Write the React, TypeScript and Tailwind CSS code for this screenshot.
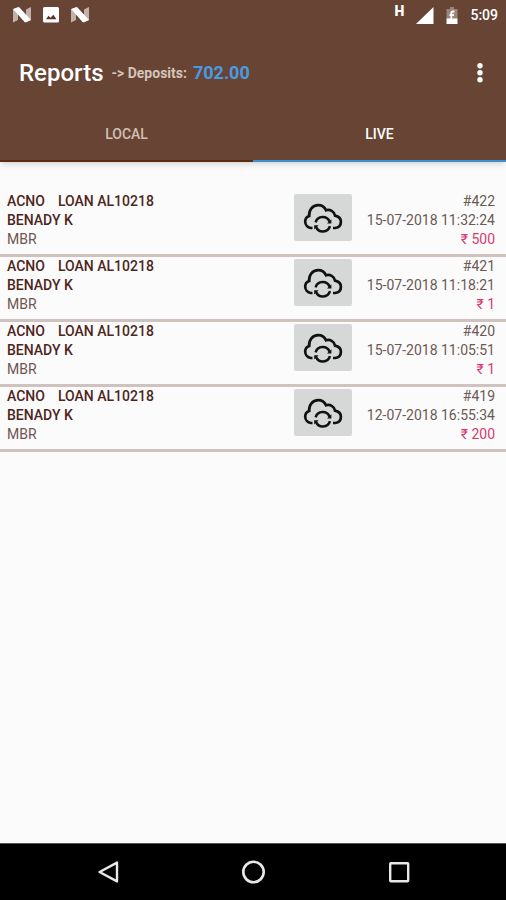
interface Deposit {
  id: number;
  account: string;
  name: string;
  branch: string;
  date: string;
  amount: number;
}

const deposits: Deposit[] = [
  { id: 422, account: 'LOAN AL10218', name: 'BENADY K', branch: 'MBR', date: '15-07-2018 11:32:24', amount: 500 },
  { id: 421, account: 'LOAN AL10218', name: 'BENADY K', branch: 'MBR', date: '15-07-2018 11:18:21', amount: 1 },
  { id: 420, account: 'LOAN AL10218', name: 'BENADY K', branch: 'MBR', date: '15-07-2018 11:05:51', amount: 1 },
  { id: 419, account: 'LOAN AL10218', name: 'BENADY K', branch: 'MBR', date: '12-07-2018 16:55:34', amount: 200 },
];

function NougatIcon() {
  return (
    <svg viewBox="0 0 18 16" className="w-[18px] h-4" aria-hidden="true">
      <path d="M0 2.5 5 0v13L0 15.5z" fill="#c3b0a8" />
      <path d="M13 2.5 18 0v13l-5 2.5z" fill="#c3b0a8" />
      <path d="M0 2 6 0l12 13-6 2.5z" fill="#fff" />
    </svg>
  );
}

function PictureIcon() {
  return (
    <svg viewBox="0 0 16 16" className="w-4 h-4" aria-hidden="true">
      <rect width="16" height="15.5" rx="1.5" fill="#fff" />
      <path d="M3 12.2 5.5 8.8l2 2 2.8-3 3.2 4.4z" fill="#5a3526" />
    </svg>
  );
}

function SignalIcon() {
  return (
    <svg viewBox="0 0 18 17" className="w-[18px] h-[17px]" aria-hidden="true">
      <path d="M17.5 0v17H0z" fill="#fff" />
    </svg>
  );
}

function BatteryIcon() {
  return (
    <svg viewBox="0 0 12 17" className="w-3 h-[17px]" aria-hidden="true">
      <path d="M4 0h4v2h3.5v10H.5V2H4z" fill="#9c8378" />
      <path d="M.5 11.5h11V17H.5z" fill="#fff" />
      <path d="M8.5 4.5H6.8C5.8 4.500 5.3 5 5.3 6v6M3.5 8H8" fill="none" stroke="#fff" strokeWidth="1.8" />
    </svg>
  );
}

function CloudSyncIcon() {
  return (
    <svg viewBox="0 0 40 30" className="w-10 h-[30px]" fill="none" stroke="#111" aria-hidden="true">
      <path
        d="M9.500 25H7.800C4.600 24.600 2.200 22 2.200 18.600c0-2.600 1.500-4.600 4-5.500C5.600 7.200 9.600 2.200 15.200 2.200c3.600 0 6.400 2 7.800 5.100 3.900-1.200 8.200.8 9 5.300 3.600.7 5.900 3 5.900 6.100 0 3.400-2.300 5.900-5.700 6.300H30"
        strokeWidth="2.7"
      />
      <path d="M12.600 19.400a7.400 7.400 0 0 1 14-.6" strokeWidth="2.5" />
      <path d="M27 23.200a7.400 7.400 0 0 1-14 .6" strokeWidth="2.500" />
      <path d="M28.400 16.200v4.200h-4.400z" fill="#111" stroke="none" />
      <path d="M11.200 26.400v-4.200h4.400z" fill="#111" stroke="none" />
    </svg>
  );
}

function StatusBar() {
  return (
    <div className="flex items-center justify-between h-[30px] pl-[13px] pr-2">
      <div className="flex items-center gap-3">
        <NougatIcon />
        <PictureIcon />
        <NougatIcon />
      </div>
      <div className="flex items-center h-full">
        <span className="self-start text-sm leading-[22px] font-black">H</span>
        <span className="flex items-center gap-3 ml-3">
          <SignalIcon />
          <BatteryIcon />
          <span className="text-sm font-medium">5:09</span>
        </span>
      </div>
    </div>
  );
}

function Toolbar() {
  return (
    <div className="flex items-center h-[77px] pt-2 pl-[19px] pr-[15px]">
      <h1 className="text-2xl font-medium">Reports</h1>
      <span className="ml-2 text-sm font-bold text-[#d5c5bb]">-&gt; Deposits:</span>
      <span className="ml-[6px] text-lg font-bold text-[#4a9be0]">702.00</span>
      <button type="button" aria-label="More options" className="ml-auto px-2 py-1">
        <svg viewBox="0 0 6 20" className="w-[6px] h-5" fill="#fff" aria-hidden="true">
          <circle cx="3" cy="2.7" r="2.7" />
          <circle cx="3" cy="9.7" r="2.7" />
          <circle cx="3" cy="16.7" r="2.7" />
        </svg>
      </button>
    </div>
  );
}

function Tabs() {
  return (
    <div role="tablist" className="flex h-[55px] text-sm font-medium">
      <button type="button" role="tab" aria-selected="false" className="flex-1 border-b-2 border-[#5a2d10] text-[#d3c0b5]">
        LOCAL
      </button>
      <button type="button" role="tab" aria-selected="true" className="flex-1 border-b-2 border-[#3d8fd1] text-white">
        LIVE
      </button>
    </div>
  );
}

function DepositRow({ deposit }: { deposit: Deposit }) {
  return (
    <li className="flex items-start h-[65px] pl-[7px] pr-[11px] border-b-3 border-[#d0c2be] text-sm leading-[19px]">
      <div className="flex-1 font-medium text-[#4e261c]">
        <p>
          <span>ACNO</span>
          <span className="ml-[13px]">{deposit.account}</span>
        </p>
        <p>{deposit.name}</p>
        <p className="font-normal text-[#6d5650]">{deposit.branch}</p>
      </div>
      <button
        type="button"
        aria-label="Sync deposit"
        className="flex items-center justify-center w-[58px] h-[47px] mt-[2px] rounded-xs bg-[#d6d8d7]"
      >
        <CloudSyncIcon />
      </button>
      <div className="w-[143px] text-right text-[#6b5954]">
        <p>#{deposit.id}</p>
        <p>{deposit.date}</p>
        <p className="text-[#d63a70]">₹ {deposit.amount}</p>
      </div>
    </li>
  );
}

function NavigationBar() {
  return (
    <nav className="flex h-[57px] px-9 bg-black border-t border-[#555]">
      <button type="button" aria-label="Back" className="flex flex-1 items-center justify-center">
        <svg viewBox="0 0 24 24" className="w-6 h-6" fill="none" stroke="#e8e8e8" strokeWidth="2.4" aria-hidden="true">
          <path d="M21 2.6v18.8L3.6 12z" strokeLinejoin="round" />
        </svg>
      </button>
      <button type="button" aria-label="Home" className="flex flex-1 items-center justify-center">
        <svg viewBox="0 0 24 24" className="w-6 h-6" fill="none" stroke="#e8e8e8" strokeWidth="2.6" aria-hidden="true">
          <circle cx="12.5" cy="12" r="10.2" />
        </svg>
      </button>
      <button type="button" aria-label="Recent apps" className="flex flex-1 items-center justify-center">
        <svg viewBox="0 0 24 24" className="w-6 h-6" fill="none" stroke="#e8e8e8" strokeWidth="2.4" aria-hidden="true">
          <rect x="4.2" y="3.2" width="18" height="18" rx="0.6" />
        </svg>
      </button>
    </nav>
  );
}

export default function App() {
  return (
    <div className="flex flex-col min-h-screen bg-[#fbfbfb] font-['Roboto',sans-serif]">
      <header className="bg-[#674434] text-white shadow-md">
        <StatusBar />
        <Toolbar />
        <Tabs />
      </header>
      <main className="flex-1 pt-[30px]">
        <ul>
          {deposits.map((deposit) => (
            <DepositRow key={deposit.id} deposit={deposit} />
          ))}
        </ul>
      </main>
      <NavigationBar />
    </div>
  );
}
